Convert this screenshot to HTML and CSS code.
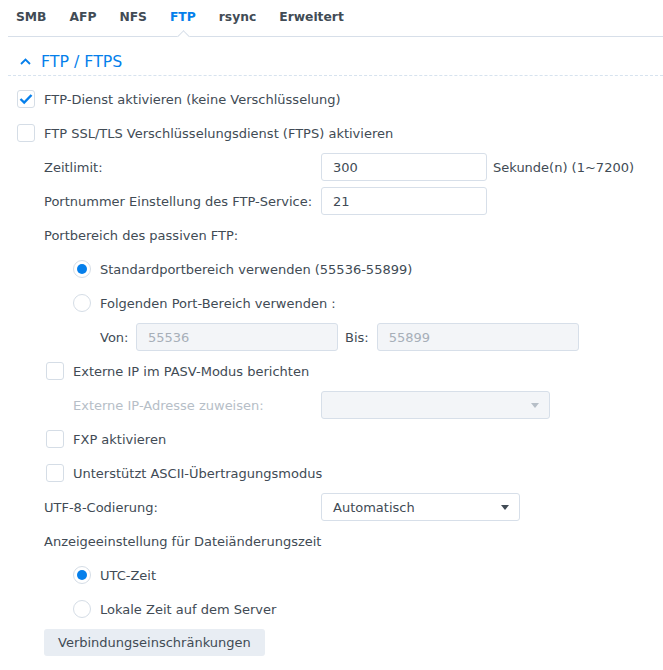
FILE: index.html
```html
<!DOCTYPE html>
<html lang="de">
<head>
<meta charset="utf-8">
<title>FTP</title>
<link rel="stylesheet" href="styles.css">
</head>
<body>
<div class="tabs">
  <span class="tab">SMB</span>
  <span class="tab">AFP</span>
  <span class="tab">NFS</span>
  <span class="tab active">FTP</span>
  <span class="tab">rsync</span>
  <span class="tab">Erweitert</span>
</div>
<div class="section-head">
  <svg class="chev" width="11" height="7" viewBox="0 0 11 7"><path d="M1 6 L5.5 1.5 L10 6" fill="none" stroke="#057feb" stroke-width="1.8"/></svg>
  <span class="section-title">FTP / FTPS</span>
</div>
<div class="form">
  <div class="row l0"><span class="cb checked"><svg width="14" height="12" viewBox="0 0 14 12"><path d="M1.5 6 L5.2 9.6 L12.5 2" fill="none" stroke="#057feb" stroke-width="2.4"/></svg></span><span>FTP-Dienst aktivieren (keine Verschlüsselung)</span></div>
  <div class="row l0"><span class="cb"></span><span>FTP SSL/TLS Verschlüsselungsdienst (FTPS) aktivieren</span></div>
  <div class="row l1"><span class="lbl">Zeitlimit:</span><span class="inp w166">300</span><span class="suffix">Sekunde(n) (1~7200)</span></div>
  <div class="row l1"><span class="lbl">Portnummer Einstellung des FTP-Service:</span><span class="inp w166">21</span></div>
  <div class="row l1"><span>Portbereich des passiven FTP:</span></div>
  <div class="row l2"><span class="rd checked"></span><span>Standardportbereich verwenden (55536-55899)</span></div>
  <div class="row l2"><span class="rd"></span><span>Folgenden Port-Bereich verwenden :</span></div>
  <div class="row l3"><span class="von">Von:</span><span class="inp disabled w202">55536</span><span class="bis">Bis:</span><span class="inp disabled w202">55899</span></div>
  <div class="row l1b"><span class="cb"></span><span>Externe IP im PASV-Modus berichten</span></div>
  <div class="row l2t"><span class="lbl2 dim">Externe IP-Adresse zuweisen:</span><span class="inp disabled w229 sel"><span></span><span class="arrow dimarrow"></span></span></div>
  <div class="row l1b"><span class="cb"></span><span>FXP aktivieren</span></div>
  <div class="row l1b"><span class="cb"></span><span>Unterstützt ASCII-Übertragungsmodus</span></div>
  <div class="row l1"><span class="lbl">UTF-8-Codierung:</span><span class="inp w199 sel"><span>Automatisch</span><span class="arrow"></span></span></div>
  <div class="row l1"><span>Anzeigeeinstellung für Dateiänderungszeit</span></div>
  <div class="row l2"><span class="rd checked"></span><span>UTC-Zeit</span></div>
  <div class="row l2"><span class="rd"></span><span>Lokale Zeit auf dem Server</span></div>
  <div class="btn-row"><span class="btn">Verbindungseinschränkungen</span></div>
</div>
</body>
</html>
```
FILE: styles.css
```css
html, body {
  margin: 0;
  padding: 0;
  background: #ffffff;
}
body {
  font-family: "DejaVu Sans", Verdana, sans-serif;
  font-size: 13px;
  color: #414b55;
}
.tabs {
  display: flex;
  gap: 23px;
  margin-left: 8px;
  padding-left: 8px;
  height: 36px;
  align-items: center;
  border-bottom: 1px solid #d7dfe9;
  position: relative;
}
.tab {
  font-weight: bold;
  font-size: 12.3px;
  color: #414b55;
  position: relative;
  height: 36px;
  line-height: 34px;
}
.tab.active {
  color: #057feb;
}
.tab.active::after {
  content: "";
  position: absolute;
  left: 50%;
  bottom: -5px;
  width: 8px;
  height: 8px;
  margin-left: -4px;
  background: #ffffff;
  border-left: 1px solid #d7dfe9;
  border-top: 1px solid #d7dfe9;
  transform: rotate(45deg);
}
.section-head {
  display: flex;
  align-items: center;
  margin-left: 8px;
  padding-top: 11px;
  height: 27px;
  padding-left: 12px;
  border-bottom: 1px dashed #d7e3ef;
}
.chev {
  margin-right: 10px;
  margin-top: -1px;
}
.section-title {
  color: #057feb;
  font-size: 15.8px;
}
.form {
  padding-top: 6px;
}
.row {
  display: flex;
  align-items: center;
  height: 34px;
}
.l0 { padding-left: 17px; }
.l1 { padding-left: 44px; }
.l1b { padding-left: 46px; }
.l2 { padding-left: 73px; }
.l2t { padding-left: 73px; }
.l3 { padding-left: 100px; }
.cb, .rd {
  width: 16px;
  height: 16px;
  border: 1px solid #d5dde6;
  border-radius: 3px;
  margin-right: 9px;
  flex: none;
  display: flex;
  align-items: center;
  justify-content: center;
  background: #fff;
}
.rd {
  border-radius: 50%;
}
.rd.checked::before {
  content: "";
  width: 10px;
  height: 10px;
  border-radius: 50%;
  background: #057feb;
}
.lbl {
  width: 277px;
  flex: none;
}
.lbl2 {
  width: 248px;
  flex: none;
}
.dim {
  color: #b6bec7;
}
.inp {
  box-sizing: border-box;
  height: 28px;
  border: 1px solid #d7dfe9;
  border-radius: 3px;
  padding-left: 11px;
  display: flex;
  align-items: center;
  flex: none;
  background: #fff;
}
.inp.disabled {
  background: #f3f5f8;
  color: #a7afb8;
}
.w166 { width: 166px; }
.w202 { width: 202px; }
.w229 { width: 229px; }
.w199 { width: 199px; }
.suffix {
  margin-left: 6px;
}
.von {
  width: 36px;
  flex: none;
}
.bis {
  margin-left: 7px;
  margin-right: 8px;
}
.sel {
  justify-content: space-between;
  padding-right: 10px;
}
.arrow {
  width: 0;
  height: 0;
  border-left: 4.5px solid transparent;
  border-right: 4.5px solid transparent;
  border-top: 5px solid #414b55;
}
.dimarrow {
  border-top-color: #b6bec7;
}
.btn-row {
  padding-left: 44px;
  margin-top: 3px;
  display: flex;
}
.btn {
  box-sizing: border-box;
  height: 27px;
  padding: 0 14px;
  background: #e8edf3;
  border-radius: 3px;
  display: flex;
  align-items: center;
}
```
